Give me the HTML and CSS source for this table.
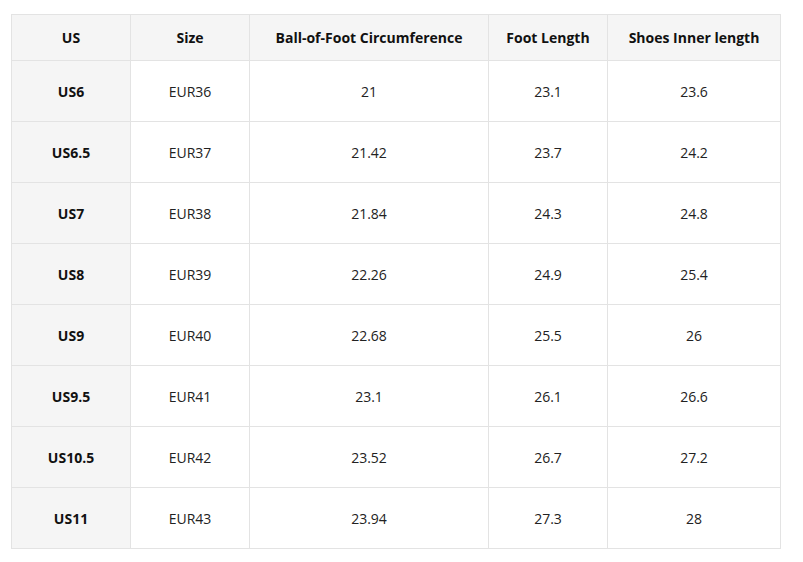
FILE: index.html
```html
<!DOCTYPE html>
<html>
<head>
<meta charset="utf-8">
<link rel="stylesheet" href="styles.css">
</head>
<body>
<table class="size-table">
  <colgroup>
    <col class="c1"><col class="c2"><col class="c3"><col class="c4"><col class="c5">
  </colgroup>
  <thead>
    <tr><th>US</th><th>Size</th><th>Ball-of-Foot Circumference</th><th>Foot Length</th><th>Shoes Inner length</th></tr>
  </thead>
  <tbody>
    <tr><th>US6</th><td>EUR36</td><td>21</td><td>23.1</td><td>23.6</td></tr>
    <tr><th>US6.5</th><td>EUR37</td><td>21.42</td><td>23.7</td><td>24.2</td></tr>
    <tr><th>US7</th><td>EUR38</td><td>21.84</td><td>24.3</td><td>24.8</td></tr>
    <tr><th>US8</th><td>EUR39</td><td>22.26</td><td>24.9</td><td>25.4</td></tr>
    <tr><th>US9</th><td>EUR40</td><td>22.68</td><td>25.5</td><td>26</td></tr>
    <tr><th>US9.5</th><td>EUR41</td><td>23.1</td><td>26.1</td><td>26.6</td></tr>
    <tr><th>US10.5</th><td>EUR42</td><td>23.52</td><td>26.7</td><td>27.2</td></tr>
    <tr><th>US11</th><td>EUR43</td><td>23.94</td><td>27.3</td><td>28</td></tr>
  </tbody>
</table>
</body>
</html>
```
FILE: styles.css
```css
html, body { background: #fff; }
body {
  margin: 14px 0 0 11px;
  font-family: "Open Sans", "Noto Sans", sans-serif;
  font-size: 14px;
  color: #111;
}
.size-table {
  border-collapse: collapse;
  table-layout: fixed;
  width: 770px;
}
.c1, .c2, .c4 { width: 119px; }
.c3 { width: 239px; }
.c5 { width: 173px; }
.size-table th, .size-table td {
  border: 1px solid #e3e3e3;
  text-align: center;
  padding: 0;
}
.size-table thead th {
  height: 45px;
  background: #f5f5f5;
  font-weight: 700;
  color: #111;
}
.size-table tbody th, .size-table tbody td {
  height: 60px;
}
.size-table tbody th {
  background: #f5f5f5;
  font-weight: 700;
}
.size-table tbody td {
  font-weight: 400;
  color: #222;
}
```
